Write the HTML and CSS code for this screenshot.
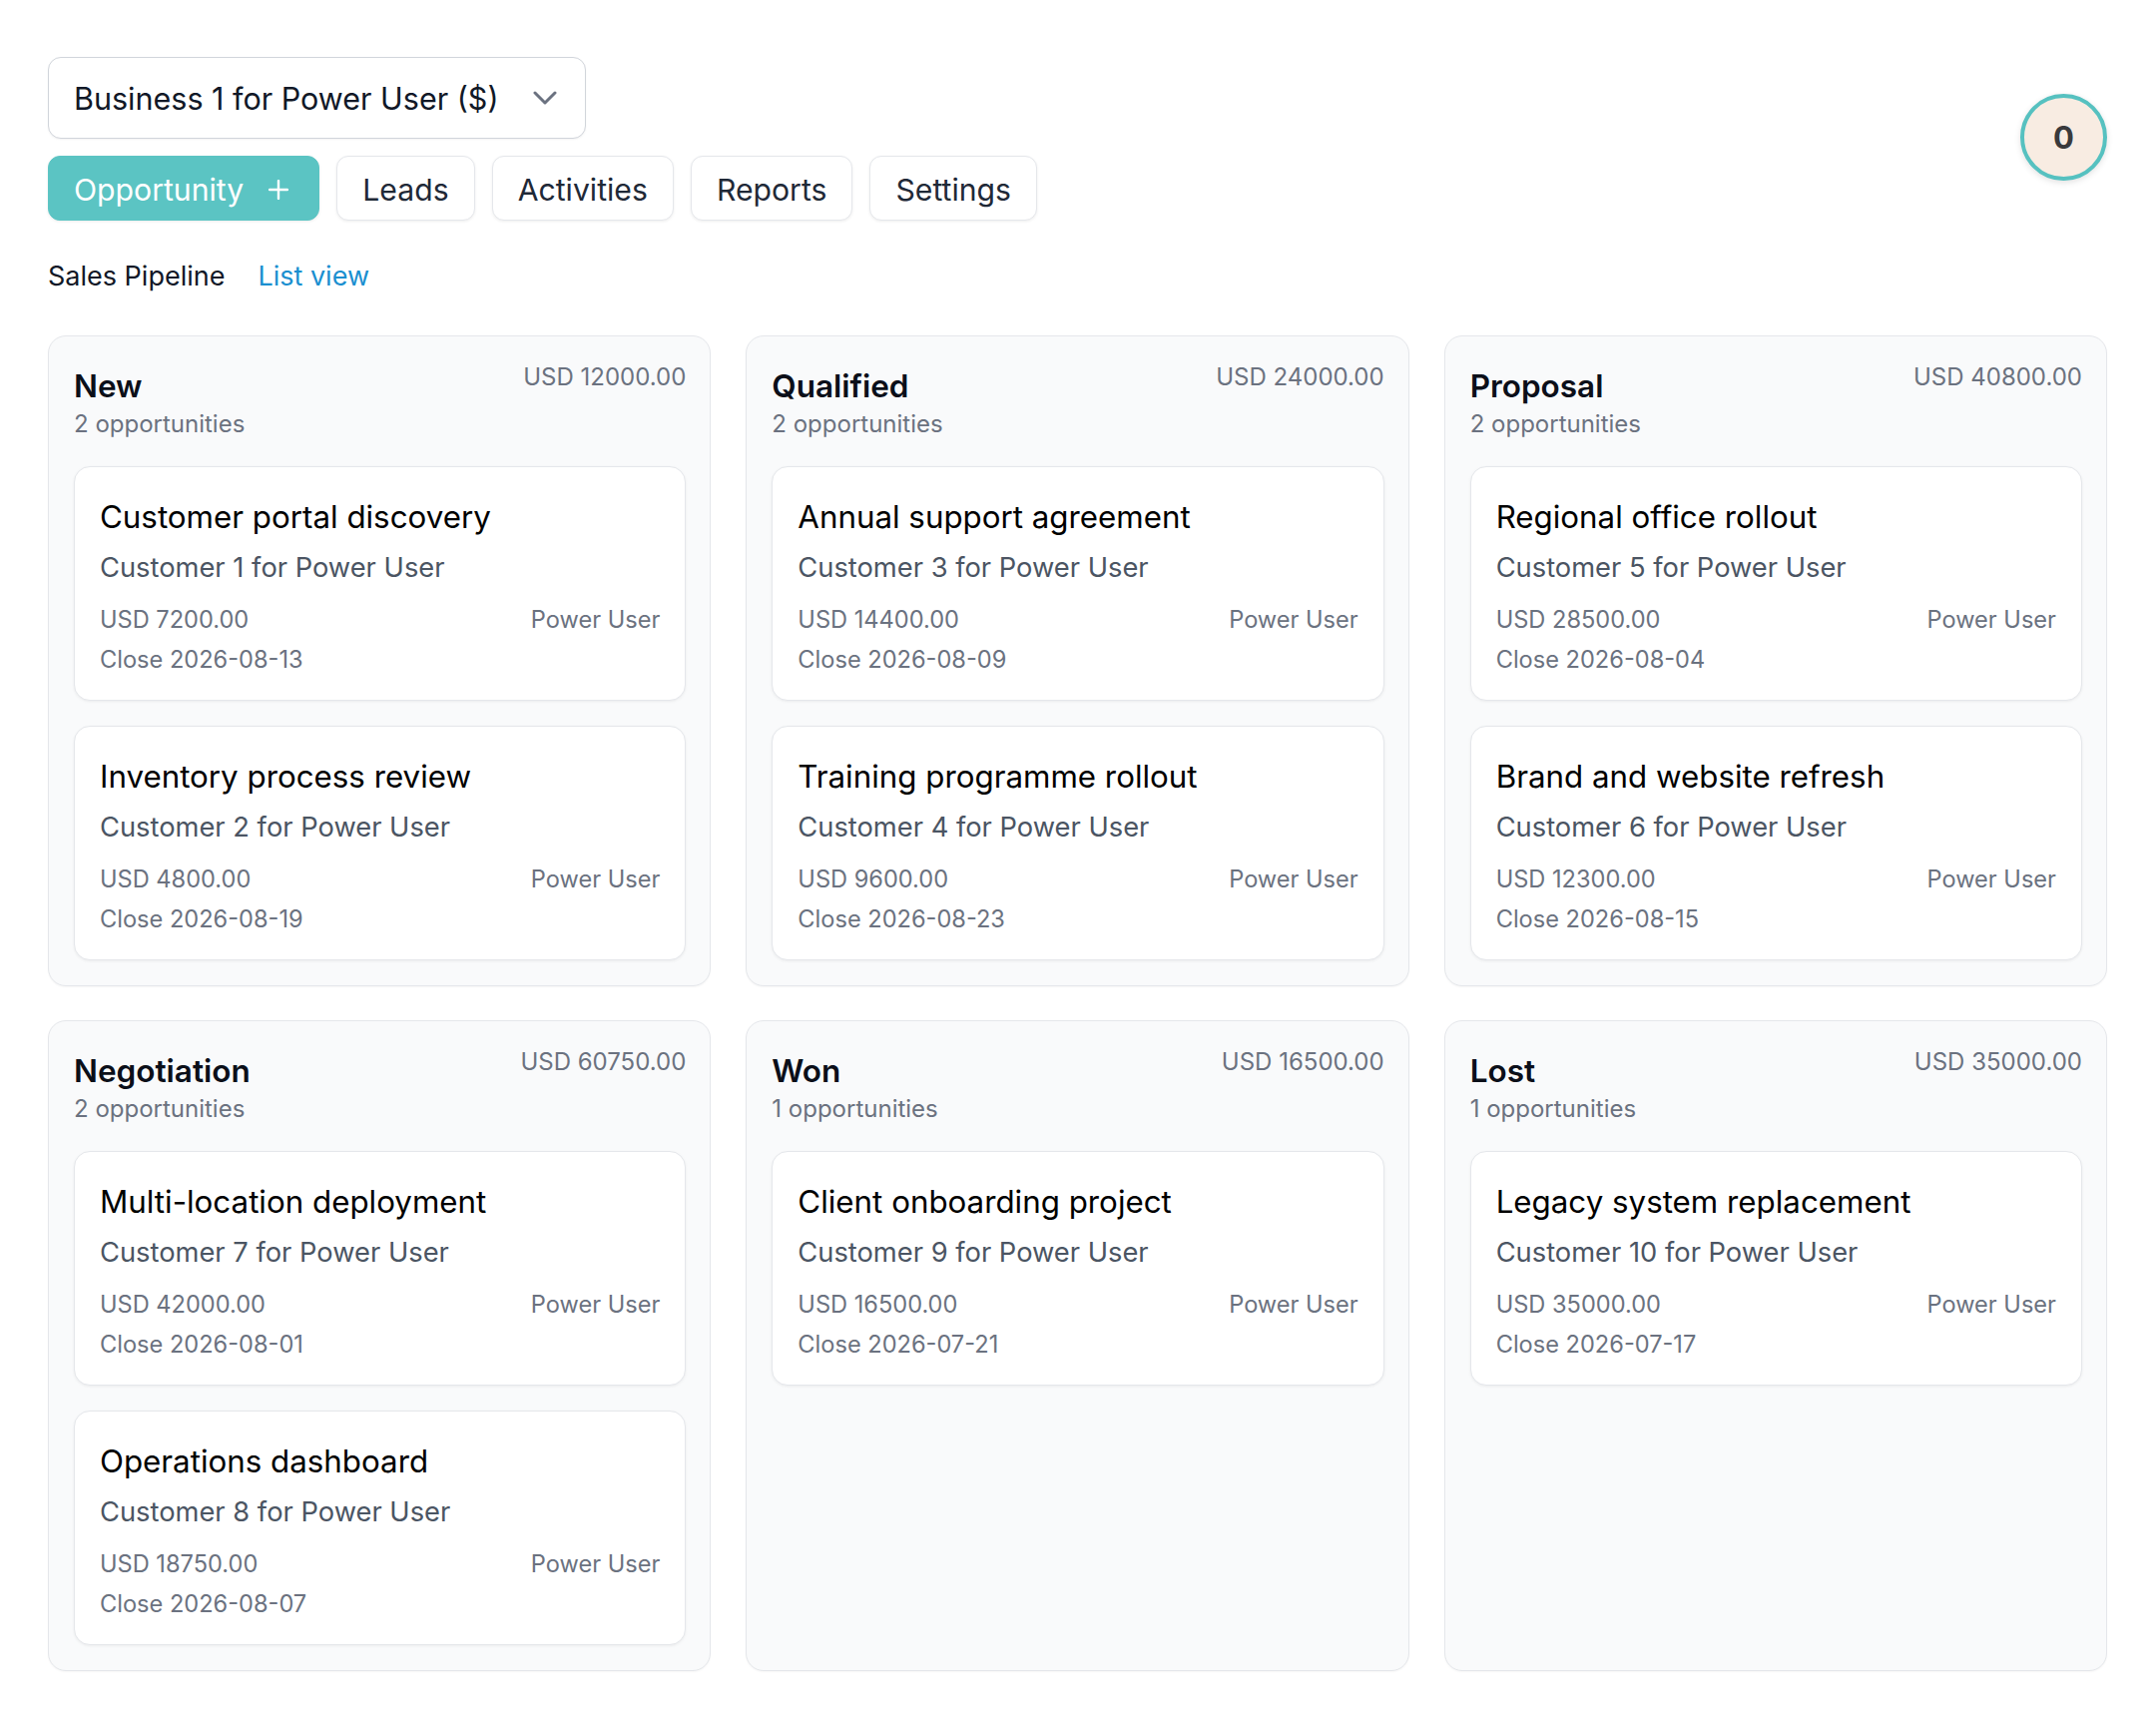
FILE: index.html
```html
<!DOCTYPE html>
<html lang="en">
<head>
<meta charset="utf-8">
<title>Sales Pipeline</title>
<link rel="stylesheet" href="styles.css">
</head>
<body>
<div class="page">
  <header class="header">
    <div class="header-left">
      <button class="business-select">
        <span>Business 1 for Power User ($)</span>
        <svg class="chevron" width="24" height="14" viewBox="0 0 24 14"><path d="M2 2 L12 12 L22 2" fill="none" stroke="#6b7280" stroke-width="3" stroke-linecap="round" stroke-linejoin="round"/></svg>
      </button>
      <nav class="tabs">
        <button class="tab tab-primary">Opportunity <svg class="plus" width="20" height="20" viewBox="0 0 20 20"><path d="M10 1 V19 M1 10 H19" stroke="#fff" stroke-width="2.4" stroke-linecap="round"/></svg></button>
        <button class="tab">Leads</button>
        <button class="tab">Activities</button>
        <button class="tab">Reports</button>
        <button class="tab">Settings</button>
      </nav>
    </div>
    <div class="avatar">0</div>
  </header>

  <div class="crumbs">
    <span class="crumb-title">Sales Pipeline</span>
    <a class="crumb-link" href="#">List view</a>
  </div>

  <main class="board">
    <section class="column">
      <div class="col-head">
        <div><h2 class="col-title">New</h2><div class="col-count">2 opportunities</div></div>
        <div class="col-amount">USD 12000.00</div>
      </div>
      <div class="cards">
        <article class="card"><h3 class="card-title">Customer portal discovery</h3><div class="card-customer">Customer 1 for Power User</div><div class="card-meta"><span>USD 7200.00</span><span>Power User</span></div><div class="card-close">Close 2026-08-13</div></article>
        <article class="card"><h3 class="card-title">Inventory process review</h3><div class="card-customer">Customer 2 for Power User</div><div class="card-meta"><span>USD 4800.00</span><span>Power User</span></div><div class="card-close">Close 2026-08-19</div></article>
      </div>
    </section>
    <section class="column">
      <div class="col-head">
        <div><h2 class="col-title">Qualified</h2><div class="col-count">2 opportunities</div></div>
        <div class="col-amount">USD 24000.00</div>
      </div>
      <div class="cards">
        <article class="card"><h3 class="card-title">Annual support agreement</h3><div class="card-customer">Customer 3 for Power User</div><div class="card-meta"><span>USD 14400.00</span><span>Power User</span></div><div class="card-close">Close 2026-08-09</div></article>
        <article class="card"><h3 class="card-title">Training programme rollout</h3><div class="card-customer">Customer 4 for Power User</div><div class="card-meta"><span>USD 9600.00</span><span>Power User</span></div><div class="card-close">Close 2026-08-23</div></article>
      </div>
    </section>
    <section class="column">
      <div class="col-head">
        <div><h2 class="col-title">Proposal</h2><div class="col-count">2 opportunities</div></div>
        <div class="col-amount">USD 40800.00</div>
      </div>
      <div class="cards">
        <article class="card"><h3 class="card-title">Regional office rollout</h3><div class="card-customer">Customer 5 for Power User</div><div class="card-meta"><span>USD 28500.00</span><span>Power User</span></div><div class="card-close">Close 2026-08-04</div></article>
        <article class="card"><h3 class="card-title">Brand and website refresh</h3><div class="card-customer">Customer 6 for Power User</div><div class="card-meta"><span>USD 12300.00</span><span>Power User</span></div><div class="card-close">Close 2026-08-15</div></article>
      </div>
    </section>
    <section class="column">
      <div class="col-head">
        <div><h2 class="col-title">Negotiation</h2><div class="col-count">2 opportunities</div></div>
        <div class="col-amount">USD 60750.00</div>
      </div>
      <div class="cards">
        <article class="card"><h3 class="card-title">Multi-location deployment</h3><div class="card-customer">Customer 7 for Power User</div><div class="card-meta"><span>USD 42000.00</span><span>Power User</span></div><div class="card-close">Close 2026-08-01</div></article>
        <article class="card"><h3 class="card-title">Operations dashboard</h3><div class="card-customer">Customer 8 for Power User</div><div class="card-meta"><span>USD 18750.00</span><span>Power User</span></div><div class="card-close">Close 2026-08-07</div></article>
      </div>
    </section>
    <section class="column">
      <div class="col-head">
        <div><h2 class="col-title">Won</h2><div class="col-count">1 opportunities</div></div>
        <div class="col-amount">USD 16500.00</div>
      </div>
      <div class="cards">
        <article class="card"><h3 class="card-title">Client onboarding project</h3><div class="card-customer">Customer 9 for Power User</div><div class="card-meta"><span>USD 16500.00</span><span>Power User</span></div><div class="card-close">Close 2026-07-21</div></article>
      </div>
    </section>
    <section class="column">
      <div class="col-head">
        <div><h2 class="col-title">Lost</h2><div class="col-count">1 opportunities</div></div>
        <div class="col-amount">USD 35000.00</div>
      </div>
      <div class="cards">
        <article class="card"><h3 class="card-title">Legacy system replacement</h3><div class="card-customer">Customer 10 for Power User</div><div class="card-meta"><span>USD 35000.00</span><span>Power User</span></div><div class="card-close">Close 2026-07-17</div></article>
      </div>
    </section>
  </main>
</div>
</body>
</html>
```

FILE: styles.css
```css
* { box-sizing: border-box; }
html, body { margin: 0; padding: 0; background: #ffffff; }
body {
  font-family: Inter, "Noto Sans", "Liberation Sans", sans-serif;
  color: #111827;
}
.page { padding: 57px 49px 48px 48px; }

.header { display: flex; justify-content: space-between; align-items: center; }
.header-left { display: flex; flex-direction: column; align-items: flex-start; gap: 17px; }

.business-select {
  display: flex; align-items: center; justify-content: space-between;
  width: 539px; height: 82px;
  padding: 0 28px 0 25px;
  background: #fff;
  border: 1.5px solid #d1d5db;
  border-radius: 13px;
  font-family: inherit; font-size: 30.5px; color: #111827;
  box-shadow: 0 1px 2px rgba(0,0,0,0.05);
}
.chevron { display: block; }

.tabs { display: flex; gap: 17px; }
.tab {
  display: inline-flex; align-items: center; gap: 25px;
  height: 65px; padding: 2px 25px 0;
  background: #fff;
  border: 1.5px solid #e5e7eb;
  border-radius: 12px;
  font-family: inherit; font-size: 30.2px; color: #1f2937;
  box-shadow: 0 1px 3px rgba(0,0,0,0.07);
}
.tab-primary {
  background: #5bc4c3; border-color: #5bc4c3; color: #fff;
  padding-right: 30px;
  box-shadow: 0 1px 3px rgba(0,0,0,0.08);
}
.plus { display: block; }

.avatar {
  width: 87px; height: 87px; border-radius: 50%;
  background: #f8ece2;
  border: 4.5px solid #56c1c0;
  display: flex; align-items: center; justify-content: center;
  font-size: 31px; font-weight: 700; color: #3a3a3c;
  box-shadow: 0 2px 6px rgba(0,0,0,0.12);
  margin-top: -4px;
}

.crumbs { display: flex; align-items: center; gap: 33px; margin-top: 34px; height: 42px; }
.crumb-title { font-size: 27px; color: #111827; }
.crumb-link { font-size: 27px; color: #1a8fd0; text-decoration: none; }

.board {
  display: grid;
  grid-template-columns: repeat(3, 1fr);
  gap: 34px 35px;
  margin-top: 39px;
}
.column {
  background: #f9fafb;
  border: 1.5px solid #e5e7eb;
  border-radius: 18px;
  padding: 24px 24px 25px 25px;
  box-shadow: 0 1px 2px rgba(0,0,0,0.04);
}
.col-head { display: flex; justify-content: space-between; align-items: flex-start; }
.col-title { margin: 5px 0 0; font-size: 31.5px; line-height: 41px; font-weight: 600; color: #0b0f19; }
.col-count { margin-top: 1px; font-size: 24px; line-height: 34px; color: #6b7280; }
.col-amount { font-size: 24px; line-height: 33px; color: #6b7280; }

.cards { display: flex; flex-direction: column; gap: 25px; margin-top: 25px; }
.card {
  background: #fff;
  border: 1.5px solid #e5e7eb;
  border-radius: 16px;
  padding: 26px 25px 22px 25px;
  box-shadow: 0 1px 3px rgba(0,0,0,0.06);
}
.card-title { margin: 0; font-size: 31.3px; line-height: 48px; font-weight: 400; color: #000; }
.card-customer { margin-top: 7px; font-size: 27.3px; line-height: 40px; color: #4b5563; }
.card-meta { display: flex; justify-content: space-between; margin-top: 14px; font-size: 23.6px; line-height: 36px; color: #6b7280; }
.card-close { margin-top: 4px; font-size: 23.6px; line-height: 36px; color: #6b7280; }
```
